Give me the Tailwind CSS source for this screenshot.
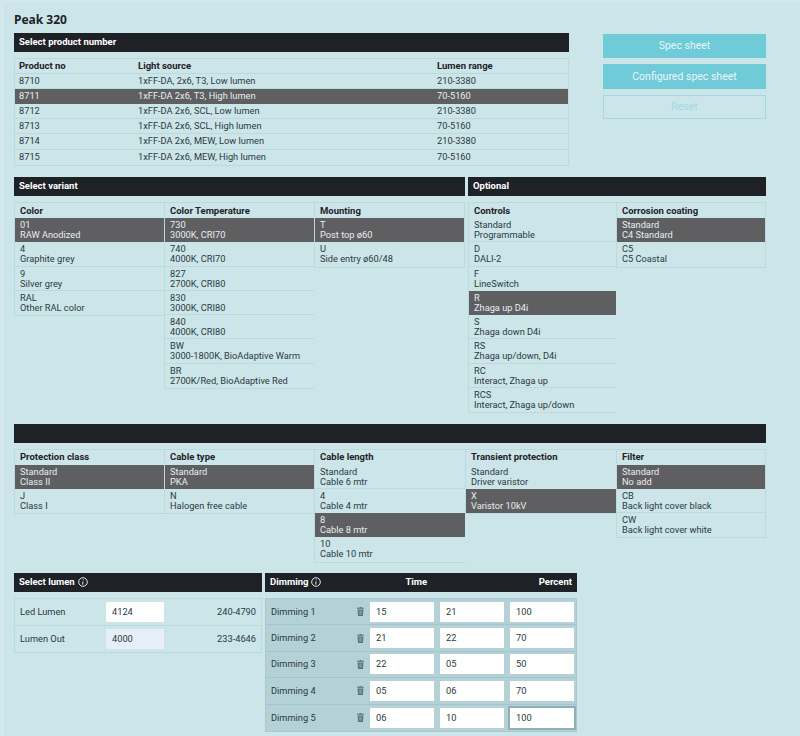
<!DOCTYPE html>
<html lang="en">
<head>
  <meta charset="UTF-8">
  <title>Peak 320</title>
  <script src="https://cdn.jsdelivr.net/npm/@tailwindcss/browser@4"></script>
</head>
<body class="bg-[#cce5e9] font-['Roboto',sans-serif] text-[9.25px] leading-[10px] text-[#2b3a40] overflow-hidden">
  <div class="w-[800px] h-[736px] border-l-[4px] border-t-[3px] border-[#d2e8ec] pl-[10px] pt-[10px] overflow-hidden">
    <h1 class="font-['Noto_Sans',sans-serif] text-[12px] leading-[14px] font-bold text-[#1e2227] h-[20px]">Peak 320</h1>

    <!-- Product number -->
    <div class="flex h-[144px]">
      <div class="w-[555px]">
        <div class="h-[19px] pb-[1px] bg-[#1e2227] text-white font-bold text-[9.5px] pl-[5px] flex items-center">Select product number</div>
        <div class="mt-[6px] border border-[#bcd9de]">
          <div class="flex h-[14.5px] items-center font-bold text-[9.5px] text-[#1e2227] border-b border-[#bcd9de]"><span class="w-[123px] pl-[4px]">Product no</span><span class="w-[299px]">Light source</span><span>Lumen range</span></div>
          <div class="flex h-[15px] items-center border-b border-[#bcd9de]"><span class="w-[123px] pl-[4px]">8710</span><span class="w-[299px]">1xFF-DA, 2x6, T3, Low lumen</span><span>210-3380</span></div>
          <div class="flex h-[15px] items-center bg-[#5f5f62] text-[#e6eef0]"><span class="w-[123px] pl-[4px]">8711</span><span class="w-[299px]">1xFF-DA 2x6, T3, High lumen</span><span>70-5160</span></div>
          <div class="flex h-[15.5px] items-center border-b border-[#bcd9de]"><span class="w-[123px] pl-[4px]">8712</span><span class="w-[299px]">1xFF-DA 2x6, SCL, Low lumen</span><span>210-3380</span></div>
          <div class="flex h-[15px] items-center border-b border-[#bcd9de]"><span class="w-[123px] pl-[4px]">8713</span><span class="w-[299px]">1xFF-DA 2x6, SCL, High lumen</span><span>70-5160</span></div>
          <div class="flex h-[15.5px] items-center border-b border-[#bcd9de]"><span class="w-[123px] pl-[4px]">8714</span><span class="w-[299px]">1xFF-DA 2x6, MEW, Low lumen</span><span>210-3380</span></div>
          <div class="flex h-[15px] items-center"><span class="w-[123px] pl-[4px]">8715</span><span class="w-[299px]">1xFF-DA 2x6, MEW, High lumen</span><span>70-5160</span></div>
        </div>
      </div>
      <div class="w-[163px] ml-[34px] mt-[0.5px] flex flex-col gap-[6px] text-[10.5px]">
        <div class="h-[24.5px] pt-[1px] bg-[#6fcbd8] text-[#e8f6f8] flex items-center justify-center">Spec sheet</div>
        <div class="h-[24.5px] pt-[1px] bg-[#6fcbd8] text-[#e8f6f8] flex items-center justify-center">Configured spec sheet</div>
        <div class="h-[24.5px] pt-[1px] border border-[#a3d8e0] text-[#a3d8e0] flex items-center justify-center">Reset</div>
      </div>
    </div>

    <!-- Variant / Optional -->
    <div class="flex gap-[3px] h-[246.5px]">
      <div class="w-[451px]">
        <div class="h-[19px] pb-[1px] bg-[#1e2227] text-white font-bold text-[9.5px] pl-[5px] flex items-center">Select variant</div>
        <div class="mt-[6px] flex items-start">
          <div class="w-[150px] border border-[#bcd9de] border-r-0">
            <div class="h-[15px] pl-[5px] flex items-center font-bold text-[9.5px] text-[#1e2227]">Color</div>
            <div class="h-[24.25px] pl-[5px] pt-[2px] bg-[#5f5f62] text-[#e6eef0]">01<br>RAW Anodized</div>
            <div class="h-[24.25px] pl-[5px] pt-[2px] border-b border-[#bcd9de]">4<br>Graphite grey</div>
            <div class="h-[24.25px] pl-[5px] pt-[2px] border-b border-[#bcd9de]">9<br>Silver grey</div>
            <div class="h-[24.25px] pl-[5px] pt-[2px]">RAL<br>Other RAL color</div>
          </div>
          <div class="w-[150px] border border-[#bcd9de] border-r-0">
            <div class="h-[15px] pl-[5px] flex items-center font-bold text-[9.5px] text-[#1e2227]">Color Temperature</div>
            <div class="h-[24.25px] pl-[5px] pt-[2px] bg-[#5f5f62] text-[#e6eef0]">730<br>3000K, CRI70</div>
            <div class="h-[24.25px] pl-[5px] pt-[2px] border-b border-[#bcd9de]">740<br>4000K, CRI70</div>
            <div class="h-[24.25px] pl-[5px] pt-[2px] border-b border-[#bcd9de]">827<br>2700K, CRI80</div>
            <div class="h-[24.25px] pl-[5px] pt-[2px] border-b border-[#bcd9de]">830<br>3000K, CRI80</div>
            <div class="h-[24.25px] pl-[5px] pt-[2px] border-b border-[#bcd9de]">840<br>4000K, CRI80</div>
            <div class="h-[24.25px] pl-[5px] pt-[2px] border-b border-[#bcd9de]">BW<br>3000-1800K, BioAdaptive Warm</div>
            <div class="h-[24.25px] pl-[5px] pt-[2px]">BR<br>2700K/Red, BioAdaptive Red</div>
          </div>
          <div class="w-[151px] border border-[#bcd9de]">
            <div class="h-[15px] pl-[5px] flex items-center font-bold text-[9.5px] text-[#1e2227]">Mounting</div>
            <div class="h-[24.25px] pl-[5px] pt-[2px] bg-[#5f5f62] text-[#e6eef0]">T<br>Post top ø60</div>
            <div class="h-[24.25px] pl-[5px] pt-[2px]">U<br>Side entry ø60/48</div>
          </div>
        </div>
      </div>
      <div class="w-[298px]">
        <div class="h-[19px] pb-[1px] bg-[#1e2227] text-white font-bold text-[9.5px] pl-[5px] flex items-center">Optional</div>
        <div class="mt-[6px] flex items-start">
          <div class="w-[148px] border border-[#bcd9de] border-r-0">
            <div class="h-[15px] pl-[5px] flex items-center font-bold text-[9.5px] text-[#1e2227]">Controls</div>
            <div class="h-[24.25px] pl-[5px] pt-[2px] border-b border-[#bcd9de]">Standard<br>Programmable</div>
            <div class="h-[24.25px] pl-[5px] pt-[2px] border-b border-[#bcd9de]">D<br>DALI-2</div>
            <div class="h-[24.25px] pl-[5px] pt-[2px]">F<br>LineSwitch</div>
            <div class="h-[24.25px] pl-[5px] pt-[2px] bg-[#5f5f62] text-[#e6eef0]">R<br>Zhaga up D4i</div>
            <div class="h-[24.25px] pl-[5px] pt-[2px] border-b border-[#bcd9de]">S<br>Zhaga down D4i</div>
            <div class="h-[24.25px] pl-[5px] pt-[2px] border-b border-[#bcd9de]">RS<br>Zhaga up/down, D4i</div>
            <div class="h-[24.25px] pl-[5px] pt-[2px] border-b border-[#bcd9de]">RC<br>Interact, Zhaga up</div>
            <div class="h-[24.25px] pl-[5px] pt-[2px]">RCS<br>Interact, Zhaga up/down</div>
          </div>
          <div class="w-[150px] border border-[#bcd9de]">
            <div class="h-[15px] pl-[5px] flex items-center font-bold text-[9.5px] text-[#1e2227]">Corrosion coating</div>
            <div class="h-[24.25px] pl-[5px] pt-[2px] bg-[#5f5f62] text-[#e6eef0]">Standard<br>C4 Standard</div>
            <div class="h-[24.25px] pl-[5px] pt-[2px]">C5<br>C5 Coastal</div>
          </div>
        </div>
      </div>
    </div>

    <!-- Second group -->
    <div class="w-[752px] h-[149.5px]">
      <div class="h-[19px] bg-[#1e2227]"></div>
      <div class="mt-[6px] flex items-start">
        <div class="w-[150px] border border-[#bcd9de] border-r-0">
          <div class="h-[15px] pl-[5px] flex items-center font-bold text-[9.5px] text-[#1e2227]">Protection class</div>
          <div class="h-[24.25px] pl-[5px] pt-[2px] bg-[#5f5f62] text-[#e6eef0]">Standard<br>Class II</div>
          <div class="h-[24.25px] pl-[5px] pt-[2px]">J<br>Class I</div>
        </div>
        <div class="w-[150px] border border-[#bcd9de] border-r-0">
          <div class="h-[15px] pl-[5px] flex items-center font-bold text-[9.5px] text-[#1e2227]">Cable type</div>
          <div class="h-[24.25px] pl-[5px] pt-[2px] bg-[#5f5f62] text-[#e6eef0]">Standard<br>PKA</div>
          <div class="h-[24.25px] pl-[5px] pt-[2px]">N<br>Halogen free cable</div>
        </div>
        <div class="w-[151px] border border-[#bcd9de] border-r-0">
          <div class="h-[15px] pl-[5px] flex items-center font-bold text-[9.5px] text-[#1e2227]">Cable length</div>
          <div class="h-[24.25px] pl-[5px] pt-[2px] border-b border-[#bcd9de]">Standard<br>Cable 6 mtr</div>
          <div class="h-[24.25px] pl-[5px] pt-[2px]">4<br>Cable 4 mtr</div>
          <div class="h-[24.25px] pl-[5px] pt-[2px] bg-[#5f5f62] text-[#e6eef0]">8<br>Cable 8 mtr</div>
          <div class="h-[24.25px] pl-[5px] pt-[2px]">10<br>Cable 10 mtr</div>
        </div>
        <div class="w-[151px] border border-[#bcd9de] border-r-0">
          <div class="h-[15px] pl-[5px] flex items-center font-bold text-[9.5px] text-[#1e2227]">Transient protection</div>
          <div class="h-[24.25px] pl-[5px] pt-[2px]">Standard<br>Driver varistor</div>
          <div class="h-[24.25px] pl-[5px] pt-[2px] bg-[#5f5f62] text-[#e6eef0]">X<br>Varistor 10kV</div>
        </div>
        <div class="w-[150px] border border-[#bcd9de]">
          <div class="h-[15px] pl-[5px] flex items-center font-bold text-[9.5px] text-[#1e2227]">Filter</div>
          <div class="h-[24.25px] pl-[5px] pt-[2px] bg-[#5f5f62] text-[#e6eef0]">Standard<br>No add</div>
          <div class="h-[24.25px] pl-[5px] pt-[2px] border-b border-[#bcd9de]">CB<br>Back light cover black</div>
          <div class="h-[24.25px] pl-[5px] pt-[2px]">CW<br>Back light cover white</div>
        </div>
      </div>
    </div>

    <!-- Lumen / Dimming -->
    <div class="flex gap-[3px]">
      <div class="w-[248px]">
        <div class="h-[19px] pb-[1px] bg-[#1e2227] text-white font-bold text-[9.5px] pl-[5px] flex items-center gap-[3px]">Select lumen
          <svg width="10" height="10" viewBox="0 0 10 10" fill="none" stroke="#fff" stroke-width=".9"><circle cx="5" cy="5" r="4.3"/><path d="M5 4.4 4.7 7.6M5.2 2.4v.9"/></svg>
        </div>
        <div class="mt-[6px] border border-[#bcd9de]">
          <div class="h-[26.5px] flex items-center border-b border-[#bcd9de]"><span class="w-[91px] pl-[5px]">Led Lumen</span><span class="w-[58px] h-[20px] bg-white pl-[6px] flex items-center">4124</span><span class="flex-1 text-right pr-[5px]">240-4790</span></div>
          <div class="h-[26px] flex items-center"><span class="w-[91px] pl-[5px]">Lumen Out</span><span class="w-[58px] h-[20px] bg-[#e6eff8] pl-[6px] flex items-center">4000</span><span class="flex-1 text-right pr-[5px]">233-4646</span></div>
        </div>
      </div>
      <div class="w-[312px]">
        <div class="h-[19px] pb-[1px] bg-[#1e2227] text-white font-bold text-[9.5px] pl-[5px] flex items-center">
          <span class="flex items-center gap-[3px]">Dimming
            <svg width="10" height="10" viewBox="0 0 10 10" fill="none" stroke="#fff" stroke-width=".9"><circle cx="5" cy="5" r="4.3"/><path d="M5 4.4 4.7 7.6M5.2 2.4v.9"/></svg>
          </span>
          <span class="ml-[84px]">Time</span><span class="ml-auto pr-[5px]">Percent</span>
        </div>
        <div class="mt-[6px] bg-[#b3d1d7] border border-[#a9c9cf]">
          <div class="h-[26.4px] flex items-center border-b border-[#a5c5cb]"><span class="w-[91px] pl-[5px]">Dimming 1</span><svg class="w-[7px] h-[9px] mr-[6px]" viewBox="0 0 7 9" fill="#5d7077"><path d="M2.5 0h2v.8H7v1H0v-1h2.5zM.6 2.4h5.8L6 9H1z"/><path d="M2.3 3.4v4.4M3.5 3.4v4.4M4.7 3.4v4.4" stroke="#b3d1d7" stroke-width=".4"/></svg><span class="w-[64px] h-[20px] bg-white pl-[6px] flex items-center">15</span><span class="w-[64px] h-[20px] bg-white pl-[6px] ml-[6px] flex items-center">21</span><span class="w-[64px] h-[20px] bg-white pl-[6px] ml-[6px] flex items-center">100</span></div>
          <div class="h-[26.4px] flex items-center border-b border-[#a5c5cb]"><span class="w-[91px] pl-[5px]">Dimming 2</span><svg class="w-[7px] h-[9px] mr-[6px]" viewBox="0 0 7 9" fill="#5d7077"><path d="M2.5 0h2v.8H7v1H0v-1h2.5zM.6 2.4h5.8L6 9H1z"/><path d="M2.3 3.4v4.4M3.5 3.4v4.4M4.7 3.4v4.4" stroke="#b3d1d7" stroke-width=".4"/></svg><span class="w-[64px] h-[20px] bg-white pl-[6px] flex items-center">21</span><span class="w-[64px] h-[20px] bg-white pl-[6px] ml-[6px] flex items-center">22</span><span class="w-[64px] h-[20px] bg-white pl-[6px] ml-[6px] flex items-center">70</span></div>
          <div class="h-[26.4px] flex items-center border-b border-[#a5c5cb]"><span class="w-[91px] pl-[5px]">Dimming 3</span><svg class="w-[7px] h-[9px] mr-[6px]" viewBox="0 0 7 9" fill="#5d7077"><path d="M2.5 0h2v.8H7v1H0v-1h2.5zM.6 2.4h5.8L6 9H1z"/><path d="M2.3 3.4v4.4M3.5 3.4v4.4M4.7 3.4v4.4" stroke="#b3d1d7" stroke-width=".4"/></svg><span class="w-[64px] h-[20px] bg-white pl-[6px] flex items-center">22</span><span class="w-[64px] h-[20px] bg-white pl-[6px] ml-[6px] flex items-center">05</span><span class="w-[64px] h-[20px] bg-white pl-[6px] ml-[6px] flex items-center">50</span></div>
          <div class="h-[26.4px] flex items-center border-b border-[#a5c5cb]"><span class="w-[91px] pl-[5px]">Dimming 4</span><svg class="w-[7px] h-[9px] mr-[6px]" viewBox="0 0 7 9" fill="#5d7077"><path d="M2.5 0h2v.8H7v1H0v-1h2.5zM.6 2.4h5.8L6 9H1z"/><path d="M2.3 3.4v4.4M3.5 3.4v4.4M4.7 3.4v4.4" stroke="#b3d1d7" stroke-width=".4"/></svg><span class="w-[64px] h-[20px] bg-white pl-[6px] flex items-center">05</span><span class="w-[64px] h-[20px] bg-white pl-[6px] ml-[6px] flex items-center">06</span><span class="w-[64px] h-[20px] bg-white pl-[6px] ml-[6px] flex items-center">70</span></div>
          <div class="h-[26.4px] flex items-center"><span class="w-[91px] pl-[5px]">Dimming 5</span><svg class="w-[7px] h-[9px] mr-[6px]" viewBox="0 0 7 9" fill="#5d7077"><path d="M2.5 0h2v.8H7v1H0v-1h2.5zM.6 2.4h5.8L6 9H1z"/><path d="M2.3 3.4v4.4M3.5 3.4v4.4M4.7 3.4v4.4" stroke="#b3d1d7" stroke-width=".4"/></svg><span class="w-[64px] h-[20px] bg-white pl-[6px] flex items-center">06</span><span class="w-[64px] h-[20px] bg-white pl-[6px] ml-[6px] flex items-center">10</span><span class="w-[64px] h-[20px] bg-white pl-[6px] ml-[6px] flex items-center ring-2 ring-[#8fb0b6]">100</span></div>
        </div>
      </div>
    </div>
  </div>
</body>
</html>
